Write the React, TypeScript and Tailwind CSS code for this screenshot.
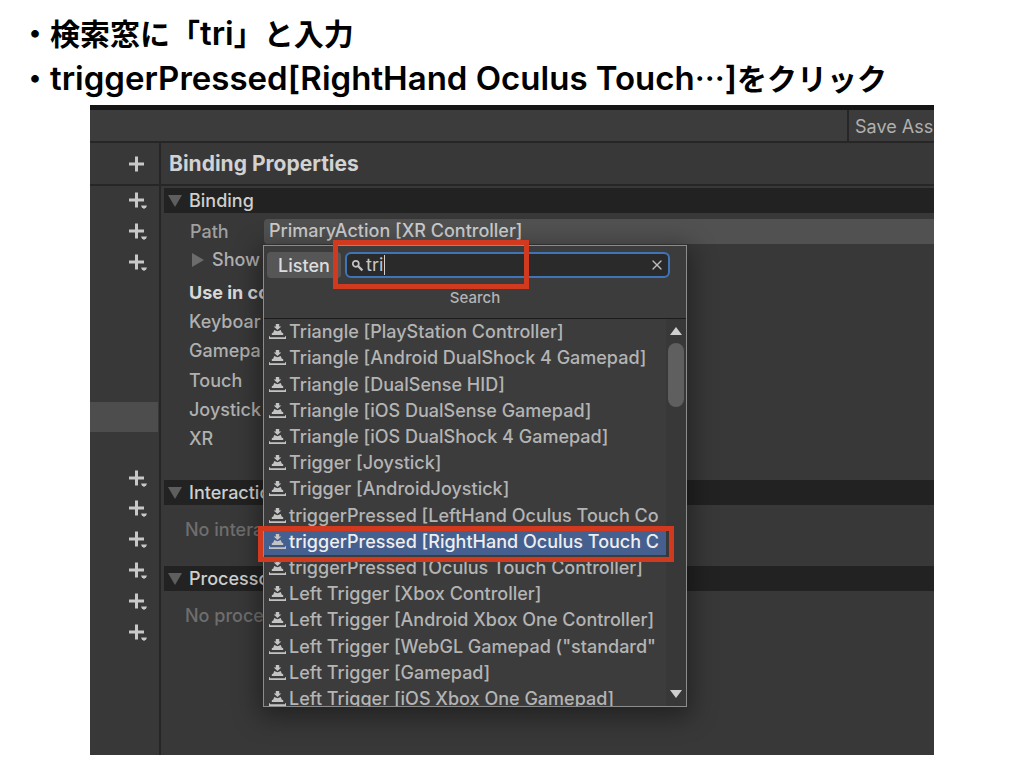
import React from 'react';
import { X } from 'lucide-react';

// Font stacks shared by the slide heading and the editor panel
const HEADING_FONT = "font-['Noto_Sans_CJK_JP',sans-serif]";
const UI_FONT = "font-['Inter',sans-serif]";

// Entries of the control picker, in display order
const results = [
  'Triangle [PlayStation Controller]',
  'Triangle [Android DualShock 4 Gamepad]',
  'Triangle [DualSense HID]',
  'Triangle [iOS DualSense Gamepad]',
  'Triangle [iOS DualShock 4 Gamepad]',
  'Trigger [Joystick]',
  'Trigger [AndroidJoystick]',
  'triggerPressed [LeftHand Oculus Touch Co',
  'triggerPressed [RightHand Oculus Touch C',
  'triggerPressed [Oculus Touch Controller]',
  'Left Trigger [Xbox Controller]',
  'Left Trigger [Android Xbox One Controller]',
  'Left Trigger [WebGL Gamepad ("standard"',
  'Left Trigger [Gamepad]',
  'Left Trigger [iOS Xbox One Gamepad]',
];
const selectedIndex = 8;

// Control schemes the binding can be used in
const schemes = ['Keyboar', 'Gamepa', 'Touch', 'Joystick', 'XR'];

// Rows of the action list: which ones carry an add button
const actionRows = Array.from({ length: 15 }, (_, i) => ({
  add: i < 3 || i > 8,
  selected: i === 7,
}));

/** Plus sign, optionally with the small drop-down arrow */
const PlusIcon = ({ menu = false }: { menu?: boolean }) => (
  <svg width="20" height="20" viewBox="0 0 20 20" fill="#c8c8c8" aria-hidden="true">
    <path d="M7 1.600h3v6h6v3h-6v6H7v-6H1v-3h6z" />
    {menu && <path d="M13 14.400h6l-.8 1.800-2.200 1.800-2.200-1.800z" />}
  </svg>
);

/** Small magnifier inside the search box */
const MagnifierIcon = () => (
  <svg width="13" height="13" viewBox="0 0 13 13" fill="none" stroke="#c4c4c4" className="shrink-0" aria-hidden="true">
    <circle cx="4.800" cy="4.800" r="3" strokeWidth="1.700" />
    <path d="M7.200 7.200l4.200 4.200" strokeWidth="2.200" />
  </svg>
);

/** Stamp-like icon in front of every control */
const ControlIcon = () => (
  <svg width="17" height="16" viewBox="0 0 17 16" fill="#c4c4c4" className="shrink-0" aria-hidden="true">
    <path d="M6.800 0h3.400v2.400h2.100L8.500 6 4.700 2.400h2.100z" />
    <path d="M5.200 6l3.300 1.300L11.800 6l.9 2.400 1.500.8v1.900H2.800V9.200l1.500-.8z" />
    <path d="M0 12.200h1v1h15v-1h1V15H0z" />
  </svg>
);

/** Dark bar that opens a section of the inspector */
const SectionHeader = ({ title }: { title: string }) => (
  <button type="button" className="flex h-[25px] w-full items-center bg-[#222222] text-left text-[#cfcfcf]">
    <svg width="14" height="12" viewBox="0 0 14 12" className="ml-1 mr-[7px] shrink-0" aria-hidden="true">
      <path d="M0 0h14L7 12z" fill="#5e5e5e" />
    </svg>
    {title}
  </button>
);

/** Floating control picker with search box and result list */
const ControlPicker = () => (
  <div className="absolute left-[-1px] top-[26px] z-10 w-[424px] border border-[#8c8c8c] bg-[#3c3c3c] shadow-[0_6px_24px_4px_rgba(0,0,0,0.4)]">
    <div className="flex gap-1 px-[3px] pt-1.5">
      <button type="button" className="h-[26px] w-[74px] rounded bg-[#565656] pb-0.5 text-[#dddddd]">
        Listen
      </button>
      <div className="relative">
        <label className="flex h-[26px] w-[325px] items-center rounded-md border-2 border-[#3f74b8] bg-[#2a2a2a] pl-1 pr-[3px]">
          <MagnifierIcon />
          <input
            type="text"
            aria-label="Search controls"
            defaultValue="tri"
            className="ml-0.5 w-[19px] border-r border-[#d0d0d0] bg-transparent leading-5 font-normal text-[#c8c8c8] outline-none"
          />
          <button type="button" aria-label="Clear" className="ml-auto text-[#bdbdbd]">
            <X size={16} strokeWidth={2} />
          </button>
        </label>
        {/* Callout around the search box */}
        <div className="pointer-events-none absolute -left-3 -top-3 h-[49px] w-[196px] border-[5px] border-[#d23a20]" />
      </div>
    </div>
    <div className="flex h-[41px] items-center justify-center border-b border-[#1c1c1c] text-[15px] text-[#b4b4b4]">
      Search
    </div>

    <div className="relative flex h-[387px]">
      <div className="min-w-0 flex-1 overflow-hidden">
        <ul className="flex h-[393px] flex-col">
          {results.map((name, i) => (
            <li key={name} className={`min-h-0 flex-1 ${i === selectedIndex ? 'bg-[#455f8f]' : ''}`}>
              <button
                type="button"
                className={`flex h-full w-full items-center gap-[3px] overflow-hidden whitespace-nowrap pl-[5px] text-left ${
                  i === selectedIndex ? 'text-[#eeeeee]' : 'text-[#b4b4b4]'
                }`}
              >
                <ControlIcon />
                {name}
              </button>
            </li>
          ))}
        </ul>
      </div>
      {/* Scroll bar */}
      <div className="flex w-5 flex-col items-center bg-[#383838] py-2">
        <svg width="12" height="8" viewBox="0 0 12 8" aria-hidden="true">
          <path d="M6 0l6 8H0z" fill="#cfcfcf" />
        </svg>
        <div className="mt-2 h-16 w-4 rounded-full bg-[#5f5f5f]" />
        <svg width="12" height="8" viewBox="0 0 12 8" className="mt-auto" aria-hidden="true">
          <path d="M6 8l6-8H0z" fill="#cfcfcf" />
        </svg>
      </div>
      {/* Callout around the entry to click */}
      <div className="pointer-events-none absolute -left-1.5 top-[207px] h-9 w-[416px] border-[5px] border-[#d23a20]" />
    </div>
  </div>
);

export default function App() {
  return (
    <main className="min-h-screen bg-white">
      <header lang="ja" className={`pb-[5px] pl-5 pt-2.5 text-[30px] font-bold leading-[45px] text-black ${HEADING_FONT}`}>
        <p>
          ・検索窓に「<span className={`text-[33px] font-semibold leading-none ${UI_FONT}`}>tri</span>」と入力
        </p>
        <p>
          ・
          <span className={`text-[33px] font-semibold leading-none ${UI_FONT}`}>
            triggerPressed[RightHand Oculus Touch
          </span>
          …<span className={`text-[33px] font-semibold leading-none ${UI_FONT}`}>]</span>をクリック
        </p>
      </header>

      <section className={`mx-[90px] overflow-hidden border-t-[5px] border-[#151515] bg-[#383838] text-lg font-medium text-[#b0b0b0] ${UI_FONT}`}>
        {/* Toolbar */}
        <div className="flex h-[33px] justify-end border-b-2 border-[#262626] bg-[#3c3c3c]">
          <button type="button" className="w-[87px] overflow-hidden whitespace-nowrap border-l-2 border-[#262626] pl-1.5 pt-0.5 text-left font-normal">
            Save Ass
          </button>
        </div>

        <div className="flex h-[612px]">
          {/* Action list */}
          <aside className="w-[71px] border-r-2 border-[#262626]">
            <div className="flex h-[43px] items-center border-b-2 border-[#262626] pl-[38px] pt-0.5">
              <button type="button" aria-label="Add action">
                <PlusIcon />
              </button>
            </div>
            <div className="flex h-[462px] flex-col">
              {actionRows.map((row, i) => (
                <div key={i} className={`mr-px flex flex-1 items-center pl-[38px] ${row.selected ? 'bg-[#4d4d4d]' : ''}`}>
                  {row.add && (
                    <button type="button" aria-label="Add binding">
                      <PlusIcon menu />
                    </button>
                  )}
                </div>
              ))}
            </div>
          </aside>

          {/* Inspector */}
          <div className="min-w-0 flex-1">
            <h2 className="flex h-[43px] items-center border-b-2 border-[#262626] pl-2 pt-0.5 text-[21px] font-bold text-[#d2d2d2]">
              Binding Properties
            </h2>
            <div className="pl-[3px] pt-0.5">
              <SectionHeader title="Binding" />
              <div className="mt-[6px] flex h-[25px] items-center">
                <span className="w-[100px] pl-[26px] text-[#a0a0a0]">Path</span>
                <div className="relative h-full flex-1">
                  <button type="button" className="flex h-full w-full items-center rounded-l bg-[#515151] pb-0.5 pl-[5px] text-[#cccccc]">
                    PrimaryAction [XR Controller]
                  </button>
                  <ControlPicker />
                </div>
              </div>
              <div className="flex h-[34px] items-center pb-0.5 pl-7">
                <svg width="12" height="14" viewBox="0 0 12 14" className="mr-2 shrink-0" aria-hidden="true">
                  <path d="M0 0l12 7-12 7z" fill="#6c6c6c" />
                </svg>
                Show
              </div>
              <div className="flex h-44 flex-col pl-[25px]">
                <div className="flex flex-1 items-center font-bold text-[#d8d8d8]">Use in co</div>
                {schemes.map((name) => (
                  <div key={name} className="flex flex-1 items-center">
                    {name}
                  </div>
                ))}
              </div>
              <div className="mt-[26px]">
                <SectionHeader title="Interactio" />
              </div>
              <p className="flex h-[61px] items-center pb-[11px] pl-[21px] text-[#6e6e6e]">No intera</p>
              <SectionHeader title="Processo" />
              <p className="flex h-[61px] items-center pb-[11px] pl-[21px] text-[#6e6e6e]">No proce</p>
            </div>
          </div>
        </div>
      </section>
    </main>
  );
}
